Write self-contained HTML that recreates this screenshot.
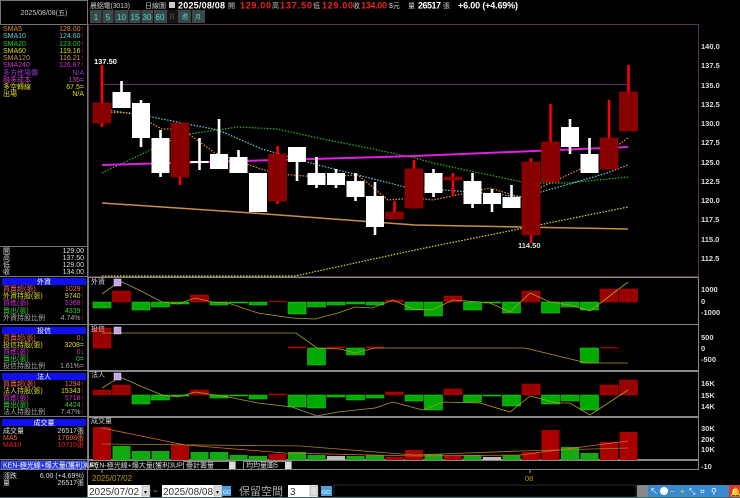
<!DOCTYPE html>
<html><head><meta charset="utf-8"><style>
html,body{margin:0;padding:0;background:#000;width:740px;height:498px;overflow:hidden}
svg{display:block}
text{font-family:"Liberation Sans","Noto Sans CJK TC",sans-serif}
.s{font-size:7px}
.ax{font-size:7.5px;fill:#ddd;font-family:"Liberation Serif","Noto Serif CJK SC",serif;font-weight:bold}
.hn{font-size:9px;font-weight:bold}
</style></head><body>
<svg id="c" width="740" height="498" viewBox="0 0 740 498" xmlns="http://www.w3.org/2000/svg">
<rect width="740" height="498" fill="#000"/>
<g stroke="#777" fill="none" stroke-width="1">
<rect x="0.5" y="0.5" width="87" height="24"/>
<line x1="87.5" y1="0" x2="87.5" y2="498"/>
<line x1="0" y1="246.5" x2="87" y2="246.5"/>
<line x1="0" y1="276.5" x2="87" y2="276.5"/>
<line x1="0" y1="324.5" x2="87" y2="324.5"/>
<line x1="0" y1="370.5" x2="87" y2="370.5"/>
<line x1="0" y1="416.5" x2="87" y2="416.5"/>
<line x1="0" y1="459.5" x2="87" y2="459.5"/>
<line x1="0" y1="469.5" x2="87" y2="469.5"/>
</g>
<text x="44" y="15" class="s" fill="#ccc" text-anchor="middle">2025/08/08(五)</text>
<g class="s">
<text x="3" y="31" fill="#e08a2a">SMA5</text><text x="84" y="31" fill="#e08a2a" text-anchor="end">128.00<tspan fill="#f22">↑</tspan></text>
<text x="3" y="38" fill="#6cd">SMA10</text><text x="84" y="38" fill="#6cd" text-anchor="end">124.60<tspan fill="#f22">↑</tspan></text>
<text x="3" y="46" fill="#2c2">SMA20</text><text x="84" y="46" fill="#2c2" text-anchor="end">123.00<tspan fill="#f22">↑</tspan></text>
<text x="3" y="53" fill="#dd2">SMA60</text><text x="84" y="53" fill="#dd2" text-anchor="end">119.16<tspan fill="#f22">↑</tspan></text>
<text x="3" y="60" fill="#c96">SMA120</text><text x="84" y="60" fill="#c96" text-anchor="end">116.21<tspan fill="#f22">↑</tspan></text>
<text x="3" y="67" fill="#c3c">SMA240</text><text x="84" y="67" fill="#c3c" text-anchor="end">126.97<tspan fill="#f22">↑</tspan></text>
<text x="3" y="75" fill="#93c">多方進場價</text><text x="84" y="75" fill="#93c" text-anchor="end">N/A</text>
<text x="3" y="82" fill="#c4c">融多成本</text><text x="84" y="82" fill="#c4c" text-anchor="end">135=</text>
<text x="3" y="89" fill="#dd2">多空轉線</text><text x="84" y="89" fill="#dd2" text-anchor="end">67.5=</text>
<text x="3" y="96" fill="#dd2">出場</text><text x="84" y="96" fill="#dd2" text-anchor="end">N/A</text>
</g>
<g class="s" fill="#ddd">
<text x="3" y="253">開</text><text x="84" y="253" text-anchor="end">129.00</text>
<text x="3" y="260">高</text><text x="84" y="260" text-anchor="end">137.50</text>
<text x="3" y="267">低</text><text x="84" y="267" text-anchor="end">129.00</text>
<text x="3" y="274">收</text><text x="84" y="274" text-anchor="end">134.00</text>
</g>
<rect x="2" y="278" width="84" height="7" fill="#1010ee"/>
<text x="44" y="284" class="s" fill="#fff" text-anchor="middle">外資</text>
<g class="s">
<text x="3" y="291" fill="#e66">買賣超(張)</text><text x="84" y="291" fill="#e66" text-anchor="end">1029<tspan fill="#f22">↑</tspan></text>
<text x="3" y="298" fill="#dd2">外資持股(張)</text><text x="84" y="298" fill="#dd2" text-anchor="end">9740<tspan fill="#f22">↑</tspan></text>
<text x="3" y="305" fill="#c3c">買進(張)</text><text x="84" y="305" fill="#c3c" text-anchor="end">5368<tspan fill="#f22">↑</tspan></text>
<text x="3" y="313" fill="#3c3">賣出(張)</text><text x="84" y="313" fill="#3c3" text-anchor="end">4339<tspan fill="#f22">↑</tspan></text>
<text x="3" y="320" fill="#aaa">外資持股比例</text><text x="84" y="320" fill="#aaa" text-anchor="end">4.74%<tspan fill="#f22">↑</tspan></text>
</g>
<rect x="2" y="327" width="84" height="7" fill="#1010ee"/>
<text x="44" y="333" class="s" fill="#fff" text-anchor="middle">投信</text>
<g class="s">
<text x="3" y="340" fill="#e66">買賣超(張)</text><text x="84" y="340" fill="#e66" text-anchor="end">0<tspan fill="#2d2">↓</tspan></text>
<text x="3" y="347" fill="#dd2">投信持股(張)</text><text x="84" y="347" fill="#dd2" text-anchor="end">3208=</text>
<text x="3" y="354" fill="#c3c">買進(張)</text><text x="84" y="354" fill="#c3c" text-anchor="end">0<tspan fill="#2d2">↓</tspan></text>
<text x="3" y="361" fill="#3c3">賣出(張)</text><text x="84" y="361" fill="#3c3" text-anchor="end">0=</text>
<text x="3" y="368" fill="#aaa">投信持股比例</text><text x="84" y="368" fill="#aaa" text-anchor="end">1.61%=</text>
</g>
<rect x="2" y="373" width="84" height="7" fill="#1010ee"/>
<text x="44" y="379" class="s" fill="#fff" text-anchor="middle">法人</text>
<g class="s">
<text x="3" y="386" fill="#e66">買賣超(張)</text><text x="84" y="386" fill="#e66" text-anchor="end">1294<tspan fill="#f22">↑</tspan></text>
<text x="3" y="393" fill="#dd2">法人持股(張)</text><text x="84" y="393" fill="#dd2" text-anchor="end">15343<tspan fill="#f22">↑</tspan></text>
<text x="3" y="400" fill="#c3c">買進(張)</text><text x="84" y="400" fill="#c3c" text-anchor="end">5718<tspan fill="#f22">↑</tspan></text>
<text x="3" y="407" fill="#3c3">賣出(張)</text><text x="84" y="407" fill="#3c3" text-anchor="end">4424<tspan fill="#f22">↑</tspan></text>
<text x="3" y="414" fill="#aaa">法人持股比例</text><text x="84" y="414" fill="#aaa" text-anchor="end">7.47%<tspan fill="#f22">↑</tspan></text>
</g>
<rect x="2" y="419" width="84" height="7" fill="#1010ee"/>
<text x="44" y="425" class="s" fill="#fff" text-anchor="middle">成交量</text>
<g class="s">
<text x="3" y="433" fill="#ddd">成交量</text><text x="84" y="433" fill="#ddd" text-anchor="end">26517張</text>
<text x="3" y="440" fill="#e63">MA5</text><text x="84" y="440" fill="#e63" text-anchor="end">17698張</text>
<text x="3" y="447" fill="#e22">MA10</text><text x="84" y="447" fill="#e22" text-anchor="end">10710張</text>
</g>
<rect x="1" y="461" width="85" height="8" fill="#2233dd" stroke="#88f" stroke-width="0.6"/>
<text x="3" y="467.5" class="s" fill="#fff">KEN-極光線+爆大量(獲利3UP)</text>
<g class="s" fill="#ddd">
<text x="3" y="478">漲跌</text><text x="84" y="478" text-anchor="end">6.00 (+4.69%)</text>
<text x="3" y="485">量</text><text x="84" y="485" text-anchor="end">26517張</text>
</g>

<!-- top header -->
<g class="s" fill="#ccc">
<text x="90" y="8" textLength="40">晨鋁電(3013)</text>
<text x="145" y="8">日線圖</text>
<rect x="169" y="2" width="6" height="6" fill="#ccc"/>
<text x="228" y="8">開</text><text x="272" y="8">高</text><text x="313" y="8">低</text><text x="353" y="8">收</text>
<text x="389" y="8">$元</text><text x="408" y="8">量</text><text x="443" y="8">張</text>
</g>
<text x="178" y="8.5" class="hn" fill="#fff" textLength="47">2025/08/08</text>
<text x="240" y="8.5" class="hn" fill="#e22" textLength="31">129.00</text>
<text x="280" y="8.5" class="hn" fill="#e22" textLength="32">137.50</text>
<text x="322" y="8.5" class="hn" fill="#e22" textLength="31">129.00</text>
<text x="361" y="8.5" class="hn" fill="#e22" textLength="26">134.00</text>
<text x="418" y="8.5" class="hn" fill="#fff" textLength="23">26517</text>
<text x="458" y="8.5" class="hn" fill="#fff" textLength="60">+6.00 (+4.69%)</text>
<g font-size="8" fill="#4dd">
<rect x="90" y="10" width="115" height="13" fill="#3c4848"/>
<rect x="167" y="10" width="11" height="13" fill="#151515"/>
<g stroke="#111" stroke-width="1"><line x1="102" y1="10" x2="102" y2="23"/><line x1="114" y1="10" x2="114" y2="23"/><line x1="129" y1="10" x2="129" y2="23"/><line x1="141" y1="10" x2="141" y2="23"/><line x1="153.5" y1="10" x2="153.5" y2="23"/><line x1="191.5" y1="10" x2="191.5" y2="23"/></g>
<text x="96" y="20" text-anchor="middle">1</text><text x="108" y="20" text-anchor="middle">5</text><text x="121.5" y="20" text-anchor="middle">10</text><text x="135" y="20" text-anchor="middle">15</text><text x="147" y="20" text-anchor="middle">30</text><text x="160" y="20" text-anchor="middle">60</text>
<text x="172" y="19" text-anchor="middle" font-size="6" fill="#555">日</text>
<text x="185" y="19" text-anchor="middle" font-size="6">週</text><text x="198" y="19" text-anchor="middle" font-size="6">月</text>
</g>

<g fill="none" stroke-width="1">
<rect x="88.5" y="24.5" width="610" height="252" stroke="#5a3450"/>
<rect x="88.5" y="277.5" width="610" height="47" stroke="#888"/>
<rect x="88.5" y="324.5" width="610" height="46" stroke="#888"/>
<rect x="88.5" y="371.5" width="610" height="45" stroke="#888"/>
<rect x="88.5" y="417.5" width="610" height="42" stroke="#888"/>
<rect x="88.5" y="460.5" width="610" height="9" stroke="#888"/>
</g>
<line x1="102" y1="84.5" x2="628" y2="84.5" stroke="#6a2a70" stroke-width="1"/>
<g id="g1"></g>
<g class="ax">
<text x="701" y="49">140.0</text><text x="701" y="68">137.5</text><text x="701" y="88">135.0</text><text x="701" y="107">132.5</text><text x="701" y="126">130.0</text><text x="701" y="145">127.5</text><text x="701" y="165">125.0</text><text x="701" y="184">122.5</text><text x="701" y="203">120.0</text><text x="701" y="222">117.5</text><text x="701" y="242">115.0</text><text x="701" y="261">112.5</text>
<text x="701" y="292">1000</text><text x="701" y="304">0</text><text x="701" y="315">-1000</text>
<text x="701" y="340">500</text><text x="701" y="351">0</text><text x="701" y="362">-500</text>
<text x="701" y="386">16K</text><text x="701" y="398">15K</text><text x="701" y="409">14K</text>
<text x="701" y="431">30K</text><text x="701" y="442">20K</text><text x="701" y="452">10K</text><text x="701" y="469">-10</text>
</g>
<text x="94" y="64" font-size="7.5" font-weight="bold" fill="#fff">137.50</text>
<text x="518" y="248" font-size="7.5" font-weight="bold" fill="#ddd">114.50</text>
<g class="s" fill="#ccc"><text x="91" y="284">外資</text><text x="91" y="331">投信</text><text x="91" y="377">法人</text><text x="91" y="423">成交量</text></g>
<g fill="#c8a0f0" stroke="#fff" stroke-width="0.4"><rect x="114" y="279" width="7" height="7"/><rect x="114" y="327" width="7" height="7"/><rect x="114" y="373" width="7" height="7"/></g>
<g class="s" fill="#ddd">
<text x="90" y="467.5">KEN-極光線+爆大量(獲利3UP)</text>
<rect x="183.5" y="461.5" width="52" height="8" fill="#000" stroke="#888"/><text x="186" y="467.5">疊計籌量</text><rect x="229" y="462" width="6" height="7" fill="#ddd"/>
<rect x="243.5" y="461.5" width="48" height="8" fill="#000" stroke="#888"/><text x="246" y="467.5">均均量圖5</text><rect x="285" y="462" width="6" height="7" fill="#ddd"/>
</g>
<line x1="102" y1="470" x2="102" y2="473" stroke="#aa8"/><line x1="530" y1="470" x2="530" y2="473" stroke="#aa8"/>
<text x="92" y="481" font-size="8" fill="#bb9a00">2025/07/02</text>
<text x="525" y="481" font-size="7.5" fill="#bb9a00">08</text>
<rect x="88" y="484" width="652" height="14" fill="#000"/>
<rect x="88" y="485" width="62" height="12" fill="#fff"/><rect x="142" y="486" width="8" height="10" fill="#ddd" stroke="#888" stroke-width="0.5"/>
<text x="89" y="495" font-size="10" fill="#333">2025/07/02</text><text x="144" y="494" font-size="6" fill="#000">▾</text>
<text x="153" y="494" font-size="8" fill="#ccc">~</text>
<rect x="162" y="485" width="60" height="12" fill="#fff"/><rect x="214" y="486" width="8" height="10" fill="#ddd" stroke="#888" stroke-width="0.5"/>
<text x="163" y="495" font-size="10" fill="#333">2025/08/08</text><text x="216" y="494" font-size="6" fill="#000">▾</text>
<rect x="222" y="486" width="9" height="10" fill="#4aa0e0"/><text x="223" y="494" font-size="5" fill="#fff">GO</text>
<text x="239" y="495" font-size="11" fill="#aaa">保留空間</text>
<rect x="288" y="485" width="30" height="12" fill="#fff"/><text x="290" y="495" font-size="10" fill="#333">3</text><rect x="310" y="486" width="8" height="10" fill="#ddd" stroke="#888" stroke-width="0.5"/>
<rect x="321" y="486" width="11" height="10" fill="#4aa0e0"/><text x="322" y="494" font-size="5.5" fill="#fff">GO</text>
<rect x="334" y="485" width="302" height="12" fill="#000" stroke="#555" stroke-width="0.5"/>
<rect x="637" y="485" width="11" height="12" fill="#888"/>
<rect x="648" y="485" width="81" height="12" fill="#3a8ad0"/>
<g font-size="8" fill="#fff"><text x="650" y="494">↖</text><circle cx="664" cy="491" r="4" fill="#fff"/><text x="670" y="494" fill="#fd0">−</text><text x="680" y="494" fill="#fd0">+</text><text x="689" y="494">⤡</text><text x="700" y="494">⌗</text><text x="711" y="494">⚲</text></g>
<rect x="729" y="485" width="11" height="12" fill="#d33"/><text x="730" y="495" font-size="9" fill="#fb0">🔔</text>
<rect x="0" y="497" width="740" height="1" fill="#3a6a6a"/>
</svg>
<script>
var NS="http://www.w3.org/2000/svg",g=document.getElementById("g1");
function el(t,a){var e=document.createElementNS(NS,t);for(var k in a)e.setAttribute(k,a[k]);g.appendChild(e);return e;}
function X(i){return 102+19.5*i;}
function pl(pts,st,w,dash){el("polyline",{points:pts.map(function(p){return p.join(",")}).join(" "),fill:"none",stroke:st,"stroke-width":w||1,"stroke-dasharray":dash||"none"});}
pl([[102,203],[252,213],[415,225],[628,229]],"#c8904a",1.5);
pl([[102,276],[295,276],[415,250],[628,207]],"#dd2",1.2,"1.5,1.5");
pl([[102,173],[182,135],[238,127],[277,129],[318,138],[368,148],[415,158],[433,163],[527,183],[567,183],[628,177]],"#2b2",1.2,"1.5,1.5");
pl([[102,109],[152,117],[218,130],[262,149],[318,165],[358,175],[405,187],[483,193],[523,197],[573,183],[607,173],[628,165]],"#7cd",1.2,"1.5,1.5");
pl([[102,112],[132,113],[162,129],[182,129],[215,153],[258,168],[278,174],[318,177],[358,175],[388,200],[415,198],[433,200],[490,188],[520,197],[557,180],[593,163],[628,138]],"#e8943a",1.2,"1.5,1.5");
pl([[102,165],[415,156],[628,147]],"#e020e0",2);
var C=[["R",103,123,65,127],["W",92,108,81,108],["W",103,138,100,147],["W",138,173,130,177],["R",123,177,123,185],["W",161,163,138,170],["W",154,169,119,169],["W",157,173,150,173],["W",173,212,173,212],["R",154,201,146,204],["W",147,162,147,181],["W",173,185,157,188],["W",173,185,169,188],["W",181,197,173,201],["W",196,227,182,235],["R",212,219,201,219],["R",169,208,160,208],["W",173,193,169,197],["R",177,180,173,196],["W",181,204,173,208],["W",193,204,189,212],["W",197,208,185,208],["R",162,235,158,243],["R",142,182,104,182],["W",127,147,119,154],["W",154,173,138,173],["R",138,169,100,169],["R",92,131,65,131]];
C.forEach(function(c,i){var x=X(i),r=c[0]=="R";
el("rect",{x:x-1.3,y:c[3],width:2.6,height:c[4]-c[3],fill:r?"#f00":"#fff"});
el("rect",{x:x-9,y:c[1],width:18,height:Math.max(1.5,c[2]-c[1]),fill:r?"#800":"#fff",stroke:r?"#a00":"none","stroke-width":0.6});});
function bars(z,v){v.forEach(function(h,i){if(!h)return;var x=X(i);el("rect",{x:x-9,y:h>0?z-h:z,width:18,height:Math.abs(h),fill:h>0?"#900":"#0a0",stroke:h>0?"#c00":"#2d2","stroke-width":0.5});});}
bars(302,[-6,11,-8,-5,-2,7,-3,-1,-3,0.5,-12,-5,-3,-2,-3,2,-8,-14,6,-8,-1,-11,11,-11,-5,-8,13,13]);
bars(348,[20,0,0,0,0,0,0,0,0,0,1,-17,1,-7,1,0,0,0,0,0,0,0,0,0,0,-15,0.5,0]);
bars(395,[5,10,-9,-5,-1,5,-3,-1,-4,1,-12,-13,-2,-5,-3,3,-6,-15,6,-7,-1,-11,11,-9,-6,-15,10,15]);
var V=[33,14,9,9,15,8,8,5,4,6,8,5,4,4,5,3,10,6,4,5,3,5,8,30,13,7,18,28],VC="RGGGRGGGGRGGwGGRRGRGwGRRGGRR";
V.forEach(function(h,i){var x=X(i),c=VC[i];el("rect",{x:x-9,y:460-h,width:18,height:h,fill:c=="R"?"#a00":c=="G"?"#1a1":"#bbb"});});
pl([[102,294],[120,281],[145,293],[162,302],[178,304],[195,298],[212,302],[228,303],[258,313],[292,318],[315,319],[338,313],[355,307],[372,308],[393,300],[413,309],[432,310],[453,300],[480,302],[490,303],[510,312],[530,293],[550,302],[570,305],[590,311],[628,282]],"#b0a020",0.8);
pl([[102,333],[296,333],[317,348],[340,349],[355,353],[375,348],[500,348],[525,348],[587,363],[628,363]],"#b0a020",0.8);
pl([[102,388],[120,377],[145,388],[162,395],[178,397],[195,392],[228,397],[258,403],[292,407],[317,416],[338,412],[375,408],[393,402],[415,408],[423,410],[443,402],[480,403],[510,412],[530,396],[557,403],[570,403],[590,415],[628,390]],"#b0a020",0.8);
pl([[102,428],[185,445],[285,453],[415,456],[520,455],[628,441]],"#e07020",0.8);
pl([[102,444],[300,446],[415,455],[520,451],[628,448]],"#a08020",0.8);
</script>
</body></html>
